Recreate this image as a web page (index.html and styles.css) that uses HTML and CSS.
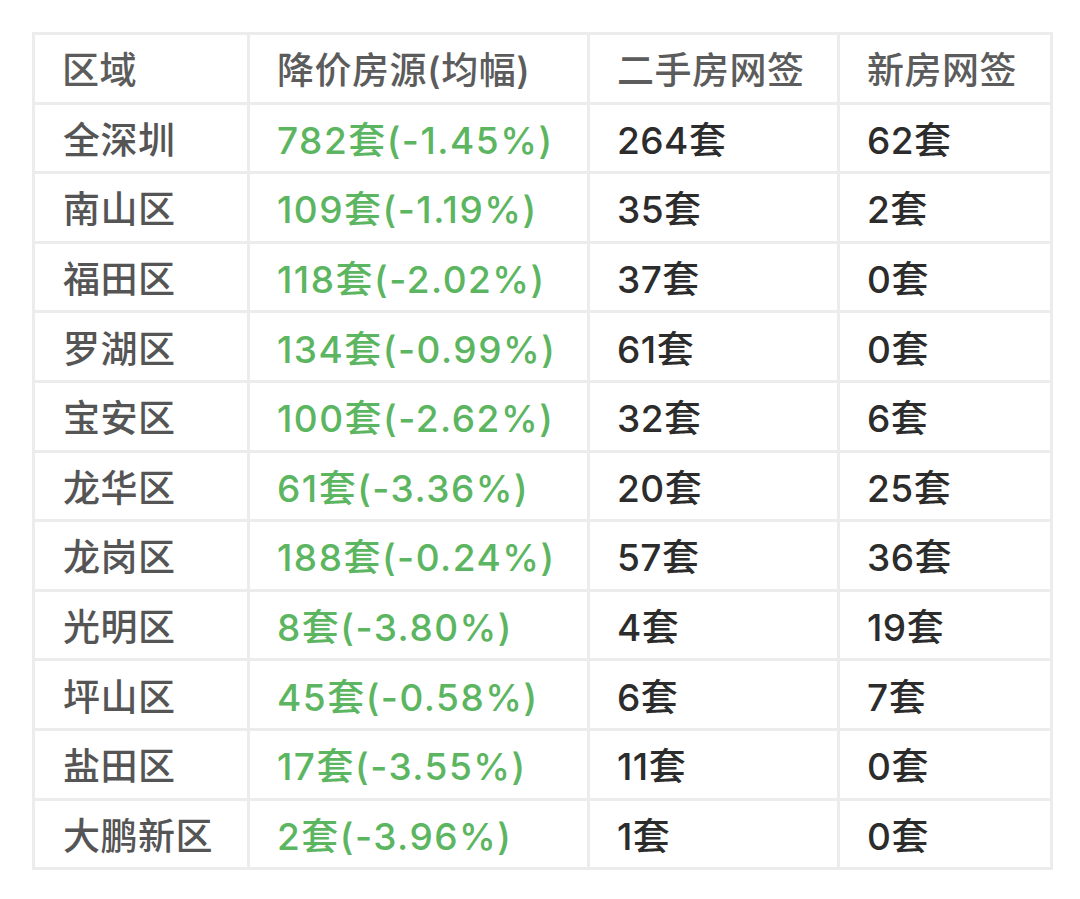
FILE: index.html
```html
<!DOCTYPE html>
<html lang="zh-CN">
<head>
<meta charset="utf-8">
<link rel="stylesheet" href="styles.css">
<title>深圳降价房源</title>
</head>
<body>
<table class="data">
  <colgroup>
    <col class="c1"><col class="c2"><col class="c3"><col class="c4">
  </colgroup>
  <thead>
    <tr><th>区域</th><th>降价房源(均幅)</th><th>二手房网签</th><th>新房网签</th></tr>
  </thead>
  <tbody>
    <tr><td class="area">全深圳</td><td class="drop">782套(-1.45%)</td><td>264套</td><td>62套</td></tr>
    <tr><td class="area">南山区</td><td class="drop">109套(-1.19%)</td><td>35套</td><td>2套</td></tr>
    <tr><td class="area">福田区</td><td class="drop">118套(-2.02%)</td><td>37套</td><td>0套</td></tr>
    <tr><td class="area">罗湖区</td><td class="drop">134套(-0.99%)</td><td>61套</td><td>0套</td></tr>
    <tr><td class="area">宝安区</td><td class="drop">100套(-2.62%)</td><td>32套</td><td>6套</td></tr>
    <tr><td class="area">龙华区</td><td class="drop">61套(-3.36%)</td><td>20套</td><td>25套</td></tr>
    <tr><td class="area">龙岗区</td><td class="drop">188套(-0.24%)</td><td>57套</td><td>36套</td></tr>
    <tr><td class="area">光明区</td><td class="drop">8套(-3.80%)</td><td>4套</td><td>19套</td></tr>
    <tr><td class="area">坪山区</td><td class="drop">45套(-0.58%)</td><td>6套</td><td>7套</td></tr>
    <tr><td class="area">盐田区</td><td class="drop">17套(-3.55%)</td><td>11套</td><td>0套</td></tr>
    <tr><td class="area">大鹏新区</td><td class="drop">2套(-3.96%)</td><td>1套</td><td>0套</td></tr>
  </tbody>
</table>
</body>
</html>
```

FILE: styles.css
```css
html, body {
  margin: 0;
  padding: 0;
  background: #ffffff;
}

body {
  padding: 32px 0 0 32px;
  font-family: Inter, "Noto Sans CJK SC", sans-serif;
}

.data {
  border-collapse: collapse;
  table-layout: fixed;
  width: 1018px;
}

.c1 { width: 215px; }
.c2 { width: 340px; }
.c3 { width: 250px; }
.c4 { width: 213px; }

.data th,
.data td {
  border: 3px solid #ececec;
  height: 66.6px;
  padding: 0 0 0 27px;
  text-align: left;
  vertical-align: middle;
  font-size: 37px;
  font-weight: 500;
  white-space: nowrap;
  color: #2c2c2c;
  letter-spacing: 0.5px;
}

.data th {
  color: #5c5c5c;
  font-weight: 500;
}

.data td.area {
  color: #555555;
  padding-left: 28px;
}

.data td.drop {
  color: #5cb560;
  letter-spacing: 1.5px;
}
```
